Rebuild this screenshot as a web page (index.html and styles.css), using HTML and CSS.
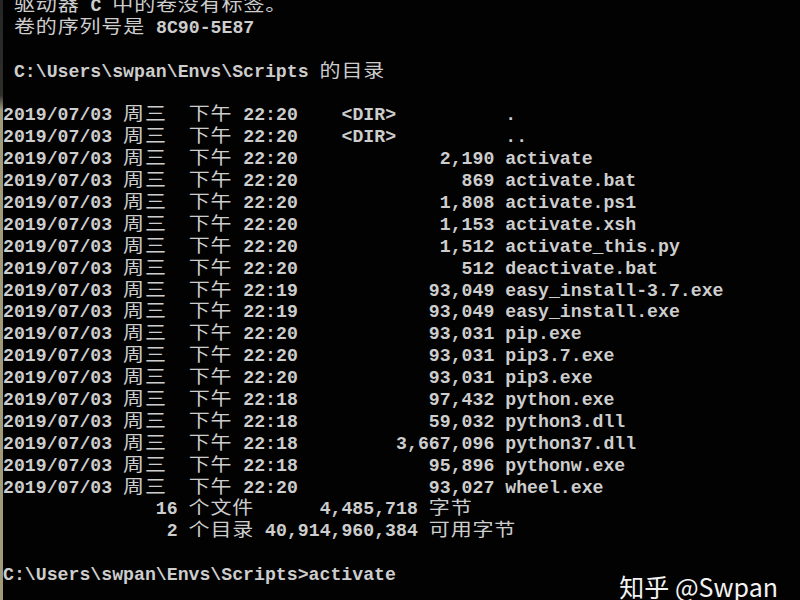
FILE: index.html
```
<!DOCTYPE html>
<html lang="zh-CN">
<head>
<meta charset="utf-8">
<title>cmd</title>
<link rel="stylesheet" href="styles.css">
</head>
<body>
<div class="screen">
<div class="edge"></div>
<div class="term">
<div class="ln"> <span class="c">驱动器</span> C <span class="c">中的卷没有标签。</span></div>
<div class="ln"> <span class="c">卷的序列号是</span> 8C90-5E87</div>
<div class="ln"></div>
<div class="ln"> C:\Users\swpan\Envs\Scripts <span class="c">的目录</span></div>
<div class="ln"></div>
<div class="ln">2019/07/03 <span class="c">周三</span>  <span class="c">下午</span> 22:20    &lt;DIR&gt;          .</div>
<div class="ln">2019/07/03 <span class="c">周三</span>  <span class="c">下午</span> 22:20    &lt;DIR&gt;          ..</div>
<div class="ln">2019/07/03 <span class="c">周三</span>  <span class="c">下午</span> 22:20             2,190 activate</div>
<div class="ln">2019/07/03 <span class="c">周三</span>  <span class="c">下午</span> 22:20               869 activate.bat</div>
<div class="ln">2019/07/03 <span class="c">周三</span>  <span class="c">下午</span> 22:20             1,808 activate.ps1</div>
<div class="ln">2019/07/03 <span class="c">周三</span>  <span class="c">下午</span> 22:20             1,153 activate.xsh</div>
<div class="ln">2019/07/03 <span class="c">周三</span>  <span class="c">下午</span> 22:20             1,512 activate_this.py</div>
<div class="ln">2019/07/03 <span class="c">周三</span>  <span class="c">下午</span> 22:20               512 deactivate.bat</div>
<div class="ln">2019/07/03 <span class="c">周三</span>  <span class="c">下午</span> 22:19            93,049 easy_install-3.7.exe</div>
<div class="ln">2019/07/03 <span class="c">周三</span>  <span class="c">下午</span> 22:19            93,049 easy_install.exe</div>
<div class="ln">2019/07/03 <span class="c">周三</span>  <span class="c">下午</span> 22:20            93,031 pip.exe</div>
<div class="ln">2019/07/03 <span class="c">周三</span>  <span class="c">下午</span> 22:20            93,031 pip3.7.exe</div>
<div class="ln">2019/07/03 <span class="c">周三</span>  <span class="c">下午</span> 22:20            93,031 pip3.exe</div>
<div class="ln">2019/07/03 <span class="c">周三</span>  <span class="c">下午</span> 22:18            97,432 python.exe</div>
<div class="ln">2019/07/03 <span class="c">周三</span>  <span class="c">下午</span> 22:18            59,032 python3.dll</div>
<div class="ln">2019/07/03 <span class="c">周三</span>  <span class="c">下午</span> 22:18         3,667,096 python37.dll</div>
<div class="ln">2019/07/03 <span class="c">周三</span>  <span class="c">下午</span> 22:18            95,896 pythonw.exe</div>
<div class="ln">2019/07/03 <span class="c">周三</span>  <span class="c">下午</span> 22:20            93,027 wheel.exe</div>
<div class="ln">              16 <span class="c">个文件</span>      4,485,718 <span class="c">字节</span></div>
<div class="ln">               2 <span class="c">个目录</span> 40,914,960,384 <span class="c">可用字节</span></div>
<div class="ln"></div>
<div class="ln">C:\Users\swpan\Envs\Scripts&gt;activate</div>
</div>
</div>
<div class="mark">知乎 @Swpan</div>
</body>
</html>
```
FILE: styles.css
```
html, body {
  margin: 0;
  padding: 0;
  background: #020202;
  width: 800px;
  height: 600px;
  overflow: hidden;
}

.screen {
  display: flex;
  height: 600px;
}

.edge {
  width: 3px;
  flex: none;
  background: linear-gradient(to bottom, #262626 0, #2e2e2a 95px, #a29977 110px, #a29977 100%);
}

.term {
  margin-top: -4px;
  padding-left: 0;
  font-family: "Liberation Mono", "DejaVu Sans Mono", monospace;
  font-size: 18.2px;
  font-weight: bold;
  color: #cdcdcd;
}

.ln {
  height: 21.9px;
  line-height: 21.9px;
  white-space: pre;
}

.c {
  display: inline-block;
  font-family: "Noto Sans CJK SC", sans-serif;
  font-weight: normal;
  font-size: 21px;
  letter-spacing: 0.86px;
  line-height: 0;
  vertical-align: -1px;
  transform: scaleY(0.86);
  transform-origin: 50% 50%;
}

.mark {
  position: absolute;
  right: 22px;
  bottom: -4px;
  font-family: "Noto Sans CJK SC", "Noto Sans", sans-serif;
  font-size: 25px;
  color: #f2f2f2;
  white-space: pre;
}
```
